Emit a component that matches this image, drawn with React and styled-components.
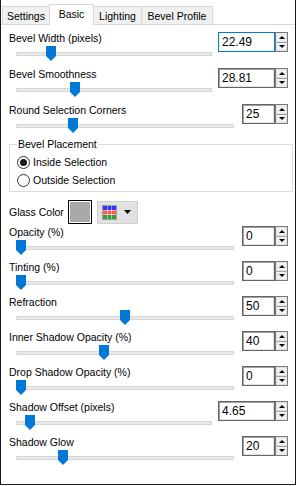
import React from 'react';
import styled, { createGlobalStyle } from 'styled-components';

const Global = createGlobalStyle`
  html, body { margin: 0; padding: 0; background: #fff; }
  body {
    font-family: "Liberation Sans", Arial, sans-serif;
    font-size: 10.5px;
    color: #000;
  }
`;

const Frame = styled.div`
  width: 296px;
  height: 485px;
  box-sizing: border-box;
  border-left: 1px solid #1a1a1a;
  border-right: 1px solid #1a1a1a;
  border-bottom: 1px solid #1a1a1a;
  display: flex;
  flex-direction: column;
  background: #fff;
`;

const TabStrip = styled.div`
  height: 24px;
  flex: none;
  display: flex;
  align-items: flex-end;
  padding-left: 1px;
`;

const Tab = styled.div`
  box-sizing: border-box;
  width: ${p => p.$w}px;
  height: ${p => (p.$active ? 21 : 18)}px;
  margin-bottom: ${p => (p.$active ? -1 : 0)}px;
  margin-left: -1px;
  &:first-child { margin-left: 0; }
  border: 1px solid #d9d9d9;
  border-bottom: none;
  background: ${p => (p.$active ? '#fff' : '#f0f0f0')};
  position: relative;
  z-index: ${p => (p.$active ? 1 : 0)};
  padding-top: 3px;
  line-height: 13px;
  text-align: center;
  white-space: nowrap;
`;

const Panel = styled.div`
  flex: 1;
  border-top: 1px solid #d9d9d9;
  padding: 7px 7px 0 8px;
  display: flex;
  flex-direction: column;
`;

const Row = styled.div`
  display: grid;
  grid-template-columns: 1fr auto;
  height: ${p => p.$h}px;
  flex: none;
`;

const LeftCol = styled.div`
  display: flex;
  flex-direction: column;
  min-width: 0;
`;

const Label = styled.div`
  height: 13px;
  line-height: 13px;
  white-space: nowrap;
`;

const Slider = styled.div`
  position: relative;
  width: ${p => p.$w}px;
  height: 16px;
  margin: 1px 0 0 7px;
`;

const Track = styled.div`
  box-sizing: border-box;
  margin-top: 6px;
  height: 4px;
  background: #e7eaea;
  border: 1px solid #d6d6d6;
`;

const ThumbSvg = styled.svg`
  position: absolute;
  top: 0;
  display: block;
`;

const Spin = styled.div`
  display: flex;
  height: 20px;
`;

const Field = styled.div`
  box-sizing: border-box;
  width: ${p => p.$w}px;
  height: 20px;
  border: 1px solid ${p => (p.$focus ? '#0078d7' : '#646464')};
  box-shadow: ${p => (p.$focus ? 'none' : 'inset 1px 1px 0 #a0a0a0, inset -1px -1px 0 #e3e3e3')};
  font-size: 12px;
  line-height: 18px;
  padding-left: 3px;
  background: #fff;
`;

const Spinner = styled.div`
  box-sizing: border-box;
  width: 13px;
  height: 20px;
  border: 1px solid #7a7a7a;
  display: flex;
  flex-direction: column;
  background: #fff;
`;

const SpinBtn = styled.div`
  flex: 1;
  box-sizing: border-box;
  background: #f0f0f0;
  border: 1px solid #e3e3e3;
  display: flex;
  align-items: center;
  justify-content: center;
  & + & { border-top: 1px solid #a0a0a0; }
`;

const Tri = styled.div`
  width: 0;
  height: 0;
  border-left: 3px solid transparent;
  border-right: 3px solid transparent;
  ${p => (p.$up ? 'border-bottom: 3px solid #000;' : 'border-top: 3px solid #000;')}
`;

const Group = styled.fieldset`
  margin: -2px -5px 0 0;
  padding: 2px 7px 2px 7px;
  border: 1px solid #dcdcdc;
  flex: none;
`;

const Legend = styled.legend`
  padding: 0 1px;
  line-height: 13px;
`;

const RadioRow = styled.label`
  display: flex;
  align-items: center;
  height: 18px;
  gap: 3px;
`;

const RadioCircle = styled.span`
  box-sizing: border-box;
  width: 13px;
  height: 13px;
  border-radius: 50%;
  border: 1px solid #333;
  background: #fff;
  display: flex;
  align-items: center;
  justify-content: center;
  &::after {
    content: '';
    width: 7px;
    height: 7px;
    border-radius: 50%;
    background: #1a1a1a;
    display: ${p => (p.$on ? 'block' : 'none')};
  }
`;

const ColorRow = styled.div`
  display: flex;
  align-items: center;
  height: 24px;
  margin: 8px 0 2px 0;
  flex: none;
`;

const ColorLabel = styled.div`
  width: 59px;
  line-height: 13px;
  white-space: nowrap;
`;

const Swatch = styled.div`
  box-sizing: border-box;
  width: 24px;
  height: 24px;
  border: 1px solid #000;
  box-shadow: inset 0 0 0 1px #fff;
  background: #a9a9a9;
`;

const ColorButton = styled.div`
  box-sizing: border-box;
  width: 41px;
  height: 23px;
  margin-left: 5px;
  background: #e1e1e1;
  border: 1px solid #d0d0d0;
  display: flex;
  align-items: center;
  padding-left: 4px;
  gap: 7px;
`;

function Thumb({ left }) {
  return (
    <ThumbSvg width="10" height="15" viewBox="0 0 10 15" style={{ left }}>
      <path d="M0 0H10V10L5 15L0 10Z" fill="#0078d7" />
    </ThumbSvg>
  );
}

function SpinBox({ value, wide, focus }) {
  return (
    <Spin>
      <Field $w={wide ? 57 : 33} $focus={focus}>{value}</Field>
      <Spinner>
        <SpinBtn><Tri $up /></SpinBtn>
        <SpinBtn><Tri /></SpinBtn>
      </Spinner>
    </Spin>
  );
}

function SliderRow({ label, value, frac, wide, focus, h = 35 }) {
  const w = wide ? 196 : 218;
  const left = Math.round(frac * (w - 10));
  return (
    <Row $h={h}>
      <LeftCol>
        <Label>{label}</Label>
        <Slider $w={w}>
          <Track />
          <Thumb left={left} />
        </Slider>
      </LeftCol>
      <SpinBox value={value} wide={wide} focus={focus} />
    </Row>
  );
}

function PaletteIcon() {
  const colors = ['#3333ff', '#ff5555', '#2f9f3f'];
  return (
    <svg width="15" height="15" viewBox="0 0 15 15">
      <rect x="0.5" y="0.5" width="14" height="14" fill="#fff" stroke="#a0a0a0" />
      {colors.map((c, r) =>
        [0, 1, 2].map(k => (
          <rect key={r + '-' + k} x={1 + k * 4.5} y={1 + r * 4.5} width="4" height="4" fill={c} />
        ))
      )}
    </svg>
  );
}

function DropArrow() {
  return (
    <svg width="7" height="4" viewBox="0 0 7 4">
      <path d="M0 0H7L3.5 4Z" fill="#000" />
    </svg>
  );
}

export default function App() {
  const tabs = [
    { name: 'Settings', w: 48 },
    { name: 'Basic', w: 45, active: true },
    { name: 'Lighting', w: 49 },
    { name: 'Bevel Profile', w: 72 },
  ];
  return (
    <>
      <Global />
      <Frame>
        <TabStrip>
          {tabs.map(t => (
            <Tab key={t.name} $w={t.w} $active={t.active}>{t.name}</Tab>
          ))}
        </TabStrip>
        <Panel>
          <SliderRow label="Bevel Width (pixels)" value="22.49" frac={30 / 186} wide focus h={36} />
          <SliderRow label="Bevel Smoothness" value="28.81" frac={54 / 186} wide h={36} />
          <SliderRow label="Round Selection Corners" value="25" frac={0.25} h={36} />
          <Group>
            <Legend>Bevel Placement</Legend>
            <RadioRow><RadioCircle $on />Inside Selection</RadioRow>
            <RadioRow><RadioCircle />Outside Selection</RadioRow>
          </Group>
          <ColorRow>
            <ColorLabel>Glass Color</ColorLabel>
            <Swatch />
            <ColorButton>
              <PaletteIcon />
              <DropArrow />
            </ColorButton>
          </ColorRow>
          <SliderRow label="Opacity (%)" value="0" frac={0} />
          <SliderRow label="Tinting (%)" value="0" frac={0} />
          <SliderRow label="Refraction" value="50" frac={0.5} />
          <SliderRow label="Inner Shadow Opacity (%)" value="40" frac={0.4} />
          <SliderRow label="Drop Shadow Opacity (%)" value="0" frac={0} />
          <SliderRow label="Shadow Offset (pixels)" value="4.65" frac={9 / 186} wide />
          <SliderRow label="Shadow Glow" value="20" frac={0.2} />
        </Panel>
      </Frame>
    </>
  );
}
